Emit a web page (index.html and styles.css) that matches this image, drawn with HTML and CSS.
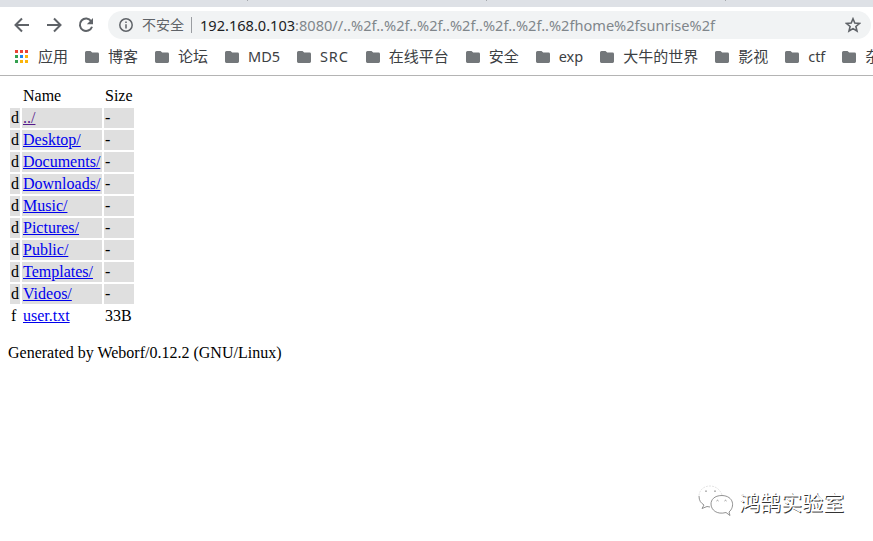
FILE: index.html
```html
<!DOCTYPE html>
<html lang="zh-CN">
<head>
<meta charset="utf-8">
<title>Weborf</title>
<link rel="stylesheet" href="styles.css">
</head>
<body>
<svg class="defs" aria-hidden="true">
  <symbol id="folder" viewBox="0 0 14 12"><path d="M1.5 0H5.5L7.2 1.6H12.6Q14 1.6 14 3V10.6Q14 12 12.6 12H1.4Q0 12 0 10.6V1.5Q0 0 1.5 0Z" fill="#73777a"/></symbol>
</svg>
<header class="browser">
  <div class="tabs"><i></i><i></i><i></i></div>
  <div class="toolbar">
    <svg class="nav" viewBox="0 0 16 16"><path d="M15 8H2M8 1.5L1.5 8L8 14.5"/></svg>
    <svg class="nav" viewBox="0 0 16 16"><path d="M1 8H14M8 1.5L14.5 8L8 14.5"/></svg>
    <svg class="nav" viewBox="0 0 16 16"><path d="M13.2 4.2A6.2 6.2 0 1 0 14 9.7"/><path class="solid" d="M15 1V7.2H8.8Z"/></svg>
    <div class="address">
      <svg class="info" viewBox="0 0 14 14"><circle cx="7" cy="7" r="6.2"/><path d="M7 6.2V10.4M7 3.5V5"/></svg>
      <span class="insecure">不安全</span>
      <span class="url"><b>192.168.0.103</b>:8080//..%2f..%2f..%2f..%2f..%2f..%2f..%2fhome%2fsunrise%2f</span>
      <svg class="star" viewBox="0 0 16 16"><path d="M8 1.8L9.8 6.1L14.4 6.5L10.9 9.5L12 14L8 11.6L4 14L5.1 9.5L1.6 6.5L6.2 6.1Z"/></svg>
    </div>
  </div>
  <nav class="bookmarks">
    <span class="bookmark apps"><svg viewBox="0 0 13 13"><path fill="#ea4335" d="M0 0h3v3H0zM5 0h3v3H5zM10 0h3v3h-3z"/><path fill="#34a04f" d="M0 5h3v3H0zM0 10h3v3H0z"/><path fill="#1a86f0" d="M5 5h3v3H5z"/><path fill="#fbb40a" d="M10 5h3v3h-3zM5 10h3v3H5zM10 10h3v3h-3z"/></svg>应用</span>
    <span class="bookmark"><svg><use href="#folder"/></svg>博客</span>
    <span class="bookmark"><svg><use href="#folder"/></svg>论坛</span>
    <span class="bookmark latin"><svg><use href="#folder"/></svg>MD5</span>
    <span class="bookmark latin wide"><svg><use href="#folder"/></svg>SRC</span>
    <span class="bookmark"><svg><use href="#folder"/></svg>在线平台</span>
    <span class="bookmark"><svg><use href="#folder"/></svg>安全</span>
    <span class="bookmark latin"><svg><use href="#folder"/></svg>exp</span>
    <span class="bookmark"><svg><use href="#folder"/></svg>大牛的世界</span>
    <span class="bookmark"><svg><use href="#folder"/></svg>影视</span>
    <span class="bookmark latin"><svg><use href="#folder"/></svg>ctf</span>
    <span class="bookmark"><svg><use href="#folder"/></svg>杂</span>
  </nav>
</header>
<main class="page">
  <table class="listing">
    <tr><td></td><td class="name">Name</td><td>Size</td></tr>
    <tr class="dir"><td>d</td><td><a class="visited" href="#">../</a></td><td>-</td></tr>
    <tr class="dir"><td>d</td><td><a href="#">Desktop/</a></td><td>-</td></tr>
    <tr class="dir"><td>d</td><td><a href="#">Documents/</a></td><td>-</td></tr>
    <tr class="dir"><td>d</td><td><a href="#">Downloads/</a></td><td>-</td></tr>
    <tr class="dir"><td>d</td><td><a href="#">Music/</a></td><td>-</td></tr>
    <tr class="dir"><td>d</td><td><a href="#">Pictures/</a></td><td>-</td></tr>
    <tr class="dir"><td>d</td><td><a href="#">Public/</a></td><td>-</td></tr>
    <tr class="dir"><td>d</td><td><a href="#">Templates/</a></td><td>-</td></tr>
    <tr class="dir"><td>d</td><td><a href="#">Videos/</a></td><td>-</td></tr>
    <tr><td>f</td><td><a href="#">user.txt</a></td><td>33B</td></tr>
  </table>
  <p class="generated">Generated by Weborf/0.12.2 (GNU/Linux)</p>
</main>
<div class="watermark">
  <svg viewBox="0 0 36 32"><path class="faint" d="M24 10C22 4 17 1 12 1C5 1 1 6 1 11"/><path d="M1 11C1 16 3 18 6 20L4 23.5L9 21.5L12 22M7 6.5q1-1.5 2 0M16 6.5q1-1.5 2 0"/><path d="M31 27C37 22 36 11 24 10.5C16 10.5 13 15 13 19C13 25 19 30 28 27.5L32 30.5Z"/><path d="M18.5 16q1-1.5 2 0M26.5 16q1-1.5 2 0"/></svg>
  <span>鸿鹄实验室</span>
</div>
</body>
</html>
```
FILE: styles.css
```css
body {
  margin: 0;
  height: 541px;
  overflow: hidden;
  background: #fff;
  color: #000;
  font: 16px/18px "Liberation Serif", serif;
}

.defs {
  position: absolute;
  width: 0;
  height: 0;
}

.browser {
  height: 75px;
  border-bottom: 1px solid #b4b4b4;
  font: 14.58px/20px "Noto Sans", "Noto Sans CJK SC", sans-serif;
  white-space: nowrap;
  overflow: hidden;
}

.tabs {
  display: flex;
  gap: 238px;
  height: 7px;
  padding-left: 247px;
  background: #dee1e6;
}

.tabs i {
  width: 1px;
  height: 1px;
  background: #a5a8ac;
}

.toolbar {
  display: flex;
  align-items: center;
  gap: 16px;
  height: 36px;
  padding: 0 2px 0 14px;
}

.nav {
  flex: none;
  width: 16px;
  height: 16px;
  fill: none;
  stroke: #5f6368;
  stroke-width: 2;
}

.nav .solid {
  fill: #5f6368;
  stroke: none;
}

.address {
  display: flex;
  flex: 1;
  align-items: center;
  box-sizing: border-box;
  height: 28px;
  margin-left: -2px;
  padding: 0 10px 0 11px;
  border-radius: 14px;
  background: #f1f3f4;
  color: #80868b;
}

.info {
  width: 14px;
  height: 14px;
  margin-right: 9px;
  fill: none;
  stroke: #5f6368;
  stroke-width: 1.5;
}

.insecure {
  width: 49px;
  border-right: 1px solid #9a9da1;
  margin-right: 8px;
  color: #5f6368;
  font-size: 14px;
  line-height: 16px;
}

.url b {
  color: #202124;
  font-weight: 400;
}

.star {
  width: 16px;
  height: 16px;
  margin-left: auto;
  fill: none;
  stroke: #5f6368;
  stroke-width: 1.6;
}

.bookmarks {
  display: flex;
  gap: 17px;
  height: 26px;
  padding-left: 15px;
  color: #3c4043;
}

.bookmark {
  display: flex;
  flex: none;
  align-items: center;
  font-size: 15px;
}

.bookmark svg {
  width: 14px;
  height: 12px;
  margin: 2px 9px 0 0;
}

.bookmark.latin {
  font-size: 14.5px;
}

.bookmark.wide {
  letter-spacing: 0.8px;
}

.bookmark.apps svg {
  width: 13px;
  height: 13px;
  margin: 1px 10px 0 0;
}

.page {
  padding: 8px;
}

.listing {
  border-spacing: 2px;
}

.listing td {
  padding: 1px;
}

.listing .name {
  width: 78px;
}

.dir td {
  background: #dfdfdf;
}

a {
  color: #0000ee;
}

a.visited {
  color: #551a8b;
}

.generated {
  margin: 16px 0;
}

.watermark {
  position: absolute;
  left: 698px;
  top: 485px;
  display: flex;
  align-items: center;
  gap: 5px;
  color: #fff;
  font: 21px/32px "Noto Sans CJK SC", sans-serif;
  text-shadow: 1px 1px 0.5px #333;
}

.watermark svg {
  width: 36px;
  height: 32px;
  fill: none;
  stroke: #777;
  stroke-width: 0.8;
}

.watermark .faint {
  stroke: #ddd;
  stroke-dasharray: 2 1;
}
```
